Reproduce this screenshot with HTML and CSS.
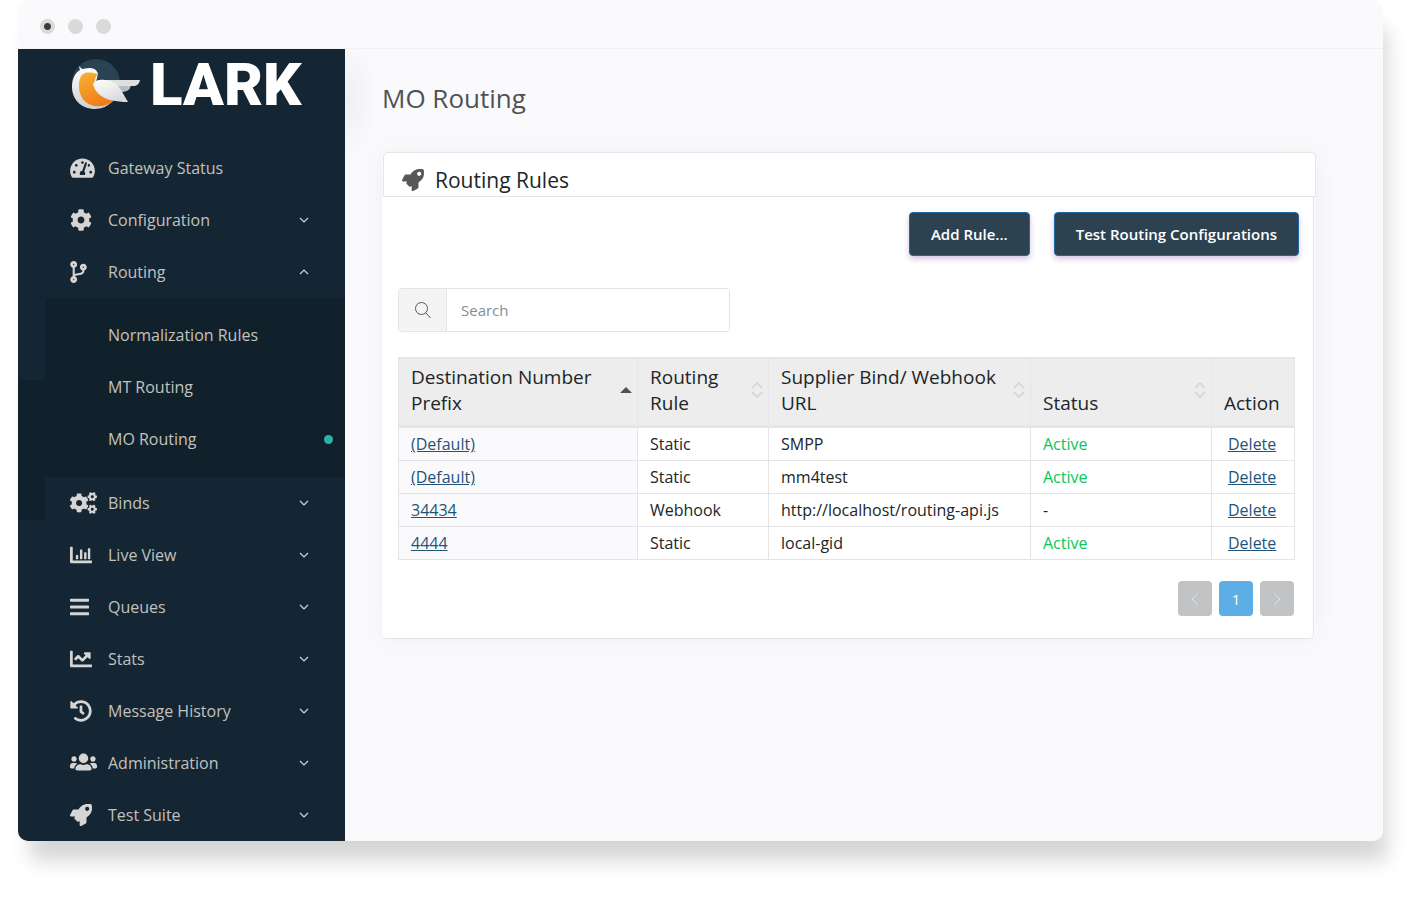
FILE: index.html
```html
<!DOCTYPE html>
<html lang="en">
<head>
<meta charset="utf-8">
<title>MO Routing</title>
<meta name="viewport" content="width=device-width, initial-scale=1">
<link rel="stylesheet" href="styles.css">
</head>
<body>
<div class="window">
  <div class="titlebar"><span class="dot dot-active"></span><span class="dot"></span><span class="dot"></span></div>
  <div class="app">
    <aside class="sidebar">
      <a class="logo" href="#">
        <svg class="logo-bird" width="70" height="50" viewBox="0 0 70 50" aria-hidden="true">
          <defs>
            <linearGradient id="body" x1="0" y1="0" x2="0" y2="1"><stop offset="0" stop-color="#fff"/><stop offset="1" stop-color="#cfd0d2"/></linearGradient>
            <linearGradient id="belly" x1="0" y1="0" x2="0.4" y2="1"><stop offset="0" stop-color="#f9b233"/><stop offset="1" stop-color="#ef7f1a"/></linearGradient>
            <linearGradient id="wing" x1="0" y1="0" x2="0.6" y2="1"><stop offset="0" stop-color="#fff"/><stop offset="1" stop-color="#d9dadc"/></linearGradient>
          </defs>
          <circle cx="25" cy="24" r="24" fill="#2a4352"/>
          <path d="M8 7l3 3 7-1c5 0 8 2 9 6l-2 8 17 19c-5 5-11 8-18 8C10 50 1 40 1 28 1 20 4 14 9 11z" fill="url(#body)"/>
          <path d="M27 15c-5-1-9-2-13-1-5 2-6 7-6 14 0 10 7 18 16 19 8 1 14-1 18-5L24 26c-1-4 0-8 3-11z" fill="url(#belly)"/>
          <path d="M44 26h16c-1 5-4 7-10 7z" fill="#b9bcbf"/>
          <path d="M28 21h41c-1 4-3 6-7 6H40z" fill="#dfe0e1"/>
          <path d="M22 25c2-4 7-5 12-4 9 1 13 5 16 10l7 12c-12 0-22-2-28-7-4-3-6-7-7-11z" fill="url(#wing)"/>
        </svg>
        <span class="logo-text">LARK</span>
      </a>
      <nav class="nav">
        <a class="nav-item" href="#"><svg class="nav-icon" width="25" height="22" viewBox="0 0 576 512"><path d="M288 32C128.900 32 0 160.900 0 320c0 52.800 14.200 102.300 39 144.800 5.600 9.600 16.300 15.200 27.400 15.200h443.200c11.100 0 21.800-5.600 27.400-15.200C561.800 422.300 576 372.800 576 320c0-159.100-128.900-288-288-288zm0 64c14.700 0 26.600 10.100 30.300 23.700-1.100 2.300-2.600 4.200-3.500 6.700l-9.200 27.700c-5.100 3.500-11 6-17.600 6-17.700 0-32-14.300-32-32S270.300 96 288 96zM96 384c-17.700 0-32-14.300-32-32s14.300-32 32-32 32 14.300 32 32-14.300 32-32 32zm48-160c-17.700 0-32-14.300-32-32s14.300-32 32-32 32 14.300 32 32-14.300 32-32 32zm246.800-72.400l-61.300 184C343.100 347.300 352 364.500 352 384c0 11.700-3.400 22.600-8.900 32H232.900c-5.500-9.500-8.900-20.300-8.900-32 0-33.900 26.500-61.400 59.900-63.600l61.300-184c4.200-12.600 17.700-19.500 30.400-15.200 12.600 4.200 19.400 17.800 15.200 30.400zm14.700 57.200l15.500-46.600c3.500-1.300 7.100-2.200 11.100-2.200 17.700 0 32 14.300 32 32s-14.300 32-32 32c-11.400 0-20.900-6.300-26.600-15.200zM480 384c-17.700 0-32-14.300-32-32s14.300-32 32-32 32 14.300 32 32-14.300 32-32 32z"/></svg><span class="nav-label">Gateway Status</span></a>
        <a class="nav-item" href="#"><svg class="nav-icon" width="22" height="22" viewBox="0 0 512 512"><path d="M487.400 315.700l-42.600-24.600c4.300-23.200 4.300-47 0-70.200l42.600-24.600c4.900-2.800 7.100-8.600 5.500-14-11.100-35.600-30-67.800-54.700-94.600-3.800-4.100-10-5.100-14.800-2.300L380.800 110c-17.900-15.400-38.500-27.300-60.800-35.100V25.800c0-5.600-3.900-10.500-9.400-11.700-36.700-8.200-74.300-7.800-109.200 0-5.500 1.200-9.400 6.100-9.400 11.700V75c-22.200 7.900-42.800 19.800-60.800 35.100L88.700 85.500c-4.900-2.800-11-1.900-14.800 2.300-24.700 26.700-43.600 58.900-54.700 94.600-1.700 5.400.6 11.200 5.500 14L67.300 221c-4.300 23.200-4.300 47 0 70.200l-42.600 24.600c-4.900 2.800-7.100 8.600-5.500 14 11.100 35.600 30 67.800 54.700 94.600 3.800 4.100 10 5.100 14.800 2.300l42.600-24.600c17.900 15.400 38.500 27.300 60.800 35.100v49.200c0 5.600 3.900 10.500 9.400 11.700 36.700 8.200 74.300 7.800 109.200 0 5.500-1.200 9.400-6.100 9.400-11.700v-49.200c22.200-7.900 42.800-19.800 60.800-35.100l42.600 24.600c4.900 2.800 11 1.900 14.800-2.300 24.700-26.700 43.600-58.900 54.700-94.600 1.500-5.500-.7-11.300-5.600-14.100zM256 336c-44.100 0-80-35.900-80-80s35.900-80 80-80 80 35.900 80 80-35.900 80-80 80z"/></svg><span class="nav-label">Configuration</span><svg class="chevron" width="10" height="6" viewBox="0 0 10 6"><path d="M1 1l4 4 4-4"/></svg></a>
        <a class="nav-item" href="#" aria-expanded="true"><svg class="nav-icon" width="17" height="22" viewBox="0 0 384 512"><path d="M384 144c0-44.200-35.800-80-80-80s-80 35.800-80 80c0 36.400 24.300 67.100 57.500 76.800-.6 16.100-4.200 28.500-11 36.900-15.400 19.200-49.300 22.400-85.200 25.700-28.200 2.600-57.400 5.400-81.300 16.900v-144c32.500-10.200 56-40.500 56-76.300 0-44.200-35.800-80-80-80S0 35.800 0 80c0 35.800 23.500 66.100 56 76.300v199.300C23.500 365.900 0 396.200 0 432c0 44.200 35.800 80 80 80s80-35.800 80-80c0-34-21.200-63.100-51.200-74.600 3.100-5.200 7.800-9.800 14.900-13.400 16.200-8.200 40.400-10.400 66.100-12.800 42.200-3.900 90-8.400 118.200-43.400 14-17.400 21.100-39.800 21.600-67.900 31.600-10.800 54.400-40.700 54.400-75.900zM80 64c8.800 0 16 7.200 16 16s-7.200 16-16 16-16-7.200-16-16 7.200-16 16-16zm0 384c-8.800 0-16-7.200-16-16s7.200-16 16-16 16 7.200 16 16-7.200 16-16 16zm224-320c8.800 0 16 7.200 16 16s-7.200 16-16 16-16-7.200-16-16 7.200-16 16-16z"/></svg><span class="nav-label">Routing</span><svg class="chevron" width="10" height="6" viewBox="0 0 10 6"><path d="M1 5l4-4 4 4"/></svg></a>
        <div class="submenu">
          <a class="nav-item" href="#"><span class="nav-label">Normalization Rules</span></a>
          <a class="nav-item" href="#"><span class="nav-label">MT Routing</span></a>
          <a class="nav-item current" href="#" aria-current="page"><span class="nav-label">MO Routing</span><span class="marker"></span></a>
        </div>
        <a class="nav-item" href="#"><svg class="nav-icon" width="27" height="22" viewBox="0 0 640 512"><path d="M512.100 191l-8.200 14.300c-3 5.300-9.400 7.500-15.100 5.400-11.800-4.400-22.600-10.700-32.100-18.600-4.600-3.800-5.800-10.500-2.800-15.700l8.200-14.300c-6.900-8-12.300-17.300-15.900-27.400h-16.500c-6 0-11.200-4.300-12.200-10.300-2-12-2.100-24.600 0-37.100 1-6 6.200-10.400 12.200-10.400h16.500c3.600-10.100 9-19.400 15.900-27.400l-8.200-14.300c-3-5.200-1.900-11.900 2.800-15.700 9.500-7.900 20.400-14.200 32.100-18.600 5.700-2.100 12.100.1 15.100 5.400l8.200 14.300c10.500-1.900 21.200-1.900 31.700 0L552 6.300c3-5.300 9.400-7.500 15.100-5.400 11.800 4.400 22.600 10.700 32.100 18.600 4.600 3.800 5.800 10.500 2.800 15.700l-8.200 14.300c6.900 8 12.300 17.300 15.900 27.400h16.500c6 0 11.200 4.300 12.200 10.300 2 12 2.100 24.600 0 37.100-1 6-6.200 10.400-12.200 10.400h-16.500c-3.600 10.100-9 19.400-15.900 27.400l8.200 14.300c3 5.200 1.900 11.900-2.800 15.700-9.500 7.900-20.400 14.200-32.100 18.600-5.700 2.100-12.100-.1-15.100-5.400l-8.200-14.300c-10.400 1.900-21.200 1.900-31.700 0zm-10.500-58.800c38.500 29.600 82.400-14.300 52.800-52.800-38.500-29.700-82.400 14.300-52.800 52.800zM386.300 286.100l33.700 16.800c10.100 5.800 14.500 18.100 10.500 29.100-8.900 24.200-26.400 46.400-42.600 65.800-7.400 8.900-20.200 11.100-30.300 5.300l-29.100-16.800c-16 13.700-34.600 24.600-54.900 31.700v33.600c0 11.600-8.300 21.600-19.700 23.600-24.600 4.200-50.400 4.400-75.900 0-11.500-2-20-11.900-20-23.600V418c-20.300-7.200-38.900-18-54.900-31.700L74 403c-10 5.800-22.900 3.600-30.300-5.300-16.200-19.400-33.300-41.600-42.200-65.700-4-10.900.4-23.200 10.500-29.100l33.300-16.800c-3.900-20.900-3.900-42.400 0-63.400L12 205.800c-10.100-5.800-14.600-18.100-10.500-29 8.900-24.200 26-46.400 42.200-65.800 7.400-8.900 20.200-11.100 30.300-5.300l29.100 16.800c16-13.700 34.600-24.600 54.900-31.700V57.100c0-11.500 8.200-21.500 19.600-23.500 24.600-4.200 50.500-4.400 76-.1 11.500 2 20 11.900 20 23.600v33.600c20.300 7.200 38.900 18 54.900 31.700l29.100-16.800c10-5.800 22.900-3.600 30.300 5.300 16.200 19.400 33.200 41.600 42.100 65.800 4 10.900.1 23.200-10 29.100l-33.700 16.800c3.900 21 3.900 42.500 0 63.500zm-117.600 21.100c59.200-77-28.700-164.900-105.700-105.700-59.200 77 28.700 164.900 105.700 105.700zm243.400 182.700l-8.200 14.300c-3 5.300-9.400 7.500-15.100 5.400-11.800-4.400-22.600-10.700-32.100-18.600-4.600-3.800-5.800-10.500-2.800-15.700l8.200-14.300c-6.900-8-12.300-17.300-15.900-27.400h-16.500c-6 0-11.200-4.300-12.200-10.300-2-12-2.100-24.600 0-37.100 1-6 6.200-10.400 12.200-10.400h16.500c3.600-10.100 9-19.400 15.900-27.400l-8.200-14.300c-3-5.200-1.900-11.900 2.800-15.700 9.500-7.900 20.400-14.200 32.100-18.600 5.700-2.100 12.100.1 15.100 5.400l8.200 14.300c10.500-1.900 21.200-1.900 31.700 0l8.200-14.300c3-5.300 9.400-7.500 15.100-5.400 11.800 4.400 22.600 10.700 32.100 18.600 4.600 3.800 5.800 10.500 2.800 15.700l-8.200 14.300c6.900 8 12.300 17.300 15.900 27.400h16.500c6 0 11.200 4.300 12.200 10.300 2 12 2.100 24.600 0 37.100-1 6-6.200 10.400-12.200 10.400h-16.500c-3.600 10.100-9 19.400-15.900 27.400l8.200 14.300c3 5.200 1.900 11.900-2.800 15.700-9.500 7.900-20.400 14.200-32.100 18.600-5.700 2.100-12.100-.1-15.100-5.400l-8.200-14.300c-10.400 1.900-21.200 1.900-31.700 0zM501.600 431c38.500 29.600 82.400-14.300 52.800-52.800-38.500-29.600-82.400 14.300-52.800 52.800z"/></svg><span class="nav-label">Binds</span><svg class="chevron" width="10" height="6" viewBox="0 0 10 6"><path d="M1 1l4 4 4-4"/></svg></a>
        <a class="nav-item" href="#"><svg class="nav-icon" width="22" height="22" viewBox="0 0 512 512"><path d="M0 80q0-16 16-16h32q16 0 16 16v304h432q16 0 16 16v32q0 16-16 16H32q-32 0-32-32zM136 268q0-12 12-12h32q12 0 12 12v72q0 12-12 12h-32q-12 0-12-12zM232 140q0-12 12-12h32q12 0 12 12v200q0 12-12 12h-32q-12 0-12-12zM328 204q0-12 12-12h32q12 0 12 12v136q0 12-12 12h-32q-12 0-12-12zM416 108q0-12 12-12h32q12 0 12 12v232q0 12-12 12h-32q-12 0-12-12z"/></svg><span class="nav-label">Live View</span><svg class="chevron" width="10" height="6" viewBox="0 0 10 6"><path d="M1 1l4 4 4-4"/></svg></a>
        <a class="nav-item" href="#"><svg class="nav-icon" width="19" height="22" viewBox="0 0 448 512"><path d="M16 132h416c8.800 0 16-7.200 16-16V76c0-8.800-7.200-16-16-16H16C7.200 60 0 67.200 0 76v40c0 8.800 7.200 16 16 16zm0 160h416c8.800 0 16-7.200 16-16v-40c0-8.800-7.200-16-16-16H16c-8.800 0-16 7.200-16 16v40c0 8.800 7.200 16 16 16zm0 160h416c8.800 0 16-7.200 16-16v-40c0-8.800-7.200-16-16-16H16c-8.800 0-16 7.200-16 16v40c0 8.800 7.200 16 16 16z"/></svg><span class="nav-label">Queues</span><svg class="chevron" width="10" height="6" viewBox="0 0 10 6"><path d="M1 1l4 4 4-4"/></svg></a>
        <a class="nav-item" href="#"><svg class="nav-icon" width="22" height="22" viewBox="0 0 512 512"><path d="M496 384H64V80c0-8.800-7.200-16-16-16H16C7.200 64 0 71.200 0 80v336c0 17.700 14.300 32 32 32h464c8.800 0 16-7.200 16-16v-32c0-8.800-7.200-16-16-16zM464 96H345.900c-21.400 0-32.100 25.900-17 41l32.400 32.400L288 242.800l-73.400-73.400c-12.500-12.500-32.800-12.500-45.300 0l-68.700 68.700c-6.200 6.200-6.200 16.400 0 22.600l22.600 22.600c6.200 6.200 16.400 6.200 22.600 0L192 237.300l73.400 73.400c12.500 12.500 32.800 12.500 45.300 0l96-96 32.400 32.400c15.100 15.100 41 4.400 41-17V112c-.1-8.800-7.300-16-16.100-16z"/></svg><span class="nav-label">Stats</span><svg class="chevron" width="10" height="6" viewBox="0 0 10 6"><path d="M1 1l4 4 4-4"/></svg></a>
        <a class="nav-item" href="#"><svg class="nav-icon" width="22" height="22" viewBox="0 0 512 512"><path d="M504 255.500c.3 136.600-111.200 248.400-247.800 248.500-59 0-113.200-20.500-155.800-54.900-11.100-8.900-11.900-25.500-1.800-35.600l11.300-11.300c8.600-8.600 22.400-9.600 31.900-2C173.100 425.100 212.800 440 256 440c101.700 0 184-82.300 184-184 0-101.700-82.300-184-184-184-48.800 0-93.100 19-126.100 49.900l50.800 50.800c10.100 10.100 2.900 27.300-11.300 27.300H24c-8.800 0-16-7.200-16-16V38.600c0-14.300 17.200-21.400 27.300-11.300l49.400 49.400C129.200 34.100 189.600 8 256 8c136.800 0 247.700 110.800 248 247.500zM323.100 334.500l9.800-12.600c8.100-10.500 6.300-25.500-4.200-33.700L288 256.300V152c0-13.300-10.700-24-24-24h-16c-13.300 0-24 10.700-24 24v135.700l65.400 50.900c10.500 8.100 25.500 6.300 33.700-4.100z"/></svg><span class="nav-label">Message History</span><svg class="chevron" width="10" height="6" viewBox="0 0 10 6"><path d="M1 1l4 4 4-4"/></svg></a>
        <a class="nav-item" href="#"><svg class="nav-icon" width="27" height="22" viewBox="0 0 640 512"><path d="M96 224c35.300 0 64-28.700 64-64s-28.700-64-64-64-64 28.700-64 64 28.700 64 64 64zm448 0c35.300 0 64-28.700 64-64s-28.700-64-64-64-64 28.700-64 64 28.700 64 64 64zm32 32h-64c-17.600 0-33.500 7.100-45.100 18.600 40.300 22.100 68.900 62 75.100 109.400h66c17.700 0 32-14.300 32-32v-32c0-35.300-28.700-64-64-64zm-256 0c61.900 0 112-50.100 112-112S381.900 32 320 32 208 82.100 208 144s50.100 112 112 112zm76.800 32h-8.300c-20.800 10-43.900 16-68.500 16s-47.600-6-68.500-16h-8.300C179.600 288 128 339.600 128 403.200V400c0 26.500 21.500 32 48 32h288c26.500 0 48-5.500 48-32v3.200c0-63.600-51.600-115.200-115.200-115.200zm-223.700-13.400C161.500 263.100 145.600 256 128 256H64c-35.300 0-64 28.700-64 64v32c0 17.700 14.300 32 32 32h65.900c6.300-47.400 34.900-87.300 75.200-109.400z"/></svg><span class="nav-label">Administration</span><svg class="chevron" width="10" height="6" viewBox="0 0 10 6"><path d="M1 1l4 4 4-4"/></svg></a>
        <a class="nav-item" href="#"><svg class="nav-icon" width="22" height="22" viewBox="0 0 512 512"><path d="M505.100 19.100C503.800 13 499 8.200 492.900 6.900 460.700 0 435.500 0 410.400 0 307.200 0 245.300 55.200 199.100 128H94.900c-18.200 0-34.800 10.300-42.900 26.500L2.600 253.300c-8 16 3.600 34.700 21.500 34.700h95.100c-5.900 12.800-11.900 25.500-18 37.700-3.100 6.200-1.900 13.600 3 18.500l63.600 63.600c4.900 4.900 12.300 6.100 18.500 3 12.200-6.100 24.900-12 37.700-17.900V488c0 17.800 18.800 29.400 34.700 21.500l98.700-49.400c16.300-8.100 26.500-24.800 26.500-42.900V312.800c72.600-46.300 128-108.400 128-211.100.1-25.200.1-50.400-6.800-82.600zM400 160c-26.500 0-48-21.500-48-48s21.500-48 48-48 48 21.500 48 48-21.500 48-48 48z"/></svg><span class="nav-label">Test Suite</span><svg class="chevron" width="10" height="6" viewBox="0 0 10 6"><path d="M1 1l4 4 4-4"/></svg></a>
      </nav>
    </aside>
    <main class="main">
      <h1 class="page-title">MO Routing</h1>
      <section class="card">
        <header class="card-header">
          <svg class="card-icon" width="22" height="22" viewBox="0 0 512 512" aria-hidden="true"><path d="M505.100 19.100C503.800 13 499 8.200 492.900 6.900 460.700 0 435.500 0 410.400 0 307.200 0 245.300 55.200 199.100 128H94.900c-18.200 0-34.800 10.300-42.900 26.500L2.600 253.300c-8 16 3.600 34.700 21.500 34.700h95.100c-5.900 12.800-11.900 25.500-18 37.700-3.100 6.200-1.900 13.600 3 18.500l63.600 63.600c4.900 4.900 12.300 6.100 18.500 3 12.200-6.100 24.900-12 37.700-17.900V488c0 17.800 18.800 29.400 34.700 21.500l98.700-49.400c16.300-8.100 26.500-24.800 26.500-42.900V312.800c72.600-46.300 128-108.400 128-211.100.1-25.200.1-50.400-6.800-82.600zM400 160c-26.500 0-48-21.500-48-48s21.500-48 48-48 48 21.500 48 48-21.500 48-48 48z"/></svg>
          <h2 class="card-title">Routing Rules</h2>
        </header>
        <div class="card-body">
          <div class="actions">
            <button class="btn" type="button">Add Rule...</button>
            <button class="btn" type="button">Test Routing Configurations</button>
          </div>
          <div class="search">
            <label class="search-icon" for="search" aria-label="Search"><svg width="16" height="17" viewBox="0 0 16 17"><circle cx="6.500" cy="6.500" r="6"/><path d="M11 11l4.500 5"/></svg></label>
            <input class="search-input" id="search" type="text" placeholder="Search">
          </div>
          <div class="table-area">
            <table class="rules">
              <colgroup><col class="col-prefix"><col class="col-rule"><col class="col-url"><col class="col-status"><col class="col-action"></colgroup>
              <thead>
                <tr>
                  <th scope="col" aria-sort="ascending"><div class="head"><span class="head-text">Destination Number Prefix</span><svg class="sort" width="12" height="6" viewBox="0 0 12 6"><path d="M0 6l6-6 6 6z" fill="#4f5355"/></svg></div></th>
                  <th scope="col"><div class="head"><span class="head-text">Routing Rule</span><svg class="sort" width="12" height="16" viewBox="0 0 12 16"><path class="sort-line" d="M1 6l5-5 5 5M1 10l5 5 5-5"/></svg></div></th>
                  <th scope="col"><div class="head"><span class="head-text">Supplier Bind/ Webhook URL</span><svg class="sort" width="12" height="16" viewBox="0 0 12 16"><path class="sort-line" d="M1 6l5-5 5 5M1 10l5 5 5-5"/></svg></div></th>
                  <th scope="col"><div class="head"><span class="head-text">Status</span><svg class="sort" width="12" height="16" viewBox="0 0 12 16"><path class="sort-line" d="M1 6l5-5 5 5M1 10l5 5 5-5"/></svg></div></th>
                  <th scope="col"><div class="head"><span class="head-text">Action</span></div></th>
                </tr>
              </thead>
              <tbody>
                <tr><td><a href="#">(Default)</a></td><td>Static</td><td>SMPP</td><td class="active">Active</td><td><a href="#">Delete</a></td></tr>
                <tr><td><a href="#">(Default)</a></td><td>Static</td><td>mm4test</td><td class="active">Active</td><td><a href="#">Delete</a></td></tr>
                <tr><td><a href="#">34434</a></td><td>Webhook</td><td>http://localhost/routing-api.js</td><td>-</td><td><a href="#">Delete</a></td></tr>
                <tr><td><a href="#">4444</a></td><td>Static</td><td>local-gid</td><td class="active">Active</td><td><a href="#">Delete</a></td></tr>
              </tbody>
            </table>
            <div class="pager">
              <button class="page-btn" type="button" aria-label="Previous page"><svg width="8" height="14" viewBox="0 0 8 14"><path d="M7 1L1 7l6 6"/></svg></button>
              <button class="page-btn page-current" type="button">1</button>
              <button class="page-btn" type="button" aria-label="Next page"><svg width="8" height="14" viewBox="0 0 8 14"><path d="M1 1l6 6-6 6"/></svg></button>
            </div>
          </div>
        </div>
      </section>
    </main>
  </div>
</div>
</body>
</html>
```
FILE: styles.css
```css
* { box-sizing: border-box; }

body {
  margin: 0;
  background: #fff;
  color: #212529;
  font-family: "Open Sans", "Noto Sans", sans-serif;
  font-size: 16px;
  line-height: 24px;
}

.window {
  margin: 0 37px 56px 18px;
  border-radius: 10px;
  background: #fafafc;
  box-shadow: 8px 24px 20px -4px #d6d6d6;
  overflow: hidden;
}

.titlebar {
  display: flex;
  align-items: center;
  gap: 13px;
  height: 49px;
  padding: 4px 22px 0;
  border-bottom: 1px solid #f2f2f5;
}

.dot {
  width: 15px;
  height: 15px;
  border-radius: 50%;
  background: #dadadb;
}

.dot-active { background: radial-gradient(circle, #3c3c3c 3px, #dadadb 4px); }

.app { display: flex; }

.sidebar {
  flex: 0 0 327px;
  padding-left: 27px;
  background: linear-gradient(#11212c, #11212c) no-repeat 0 331px / 27px 140px #142633;
}

.logo {
  display: flex;
  align-items: flex-start;
  gap: 9px;
  height: 93px;
  padding: 10px 0 0 26px;
  color: #fff;
  text-decoration: none;
}

.logo-text {
  font-family: Roboto, sans-serif;
  font-size: 60px;
  font-weight: 900;
  line-height: 52px;
}

.nav-item {
  display: grid;
  grid-template-columns: 38px 1fr auto;
  align-items: center;
  height: 52px;
  padding: 0 36px 0 25px;
  color: #c3c1be;
  text-decoration: none;
}

.nav-icon { fill: #d6d5d4; }
.nav-label { grid-column: 2; }

.chevron {
  fill: none;
  stroke: #d6d5d4;
  stroke-width: 1.2;
}

.submenu {
  padding: 11px 0 12px;
  background: #11212c;
}

.submenu .nav-item { padding-right: 12px; }

.marker {
  width: 9px;
  height: 9px;
  border-radius: 50%;
  background: #2bb3a3;
}

.main {
  flex: 1;
  min-width: 0;
  padding: 31px 67px 40px 37px;
  background: radial-gradient(ellipse 34px 60px at 0 50px, #efeef1, #fafafc) no-repeat;
}

.page-title {
  margin: 0 0 36px;
  color: #4f5254;
  font-size: 26px;
  font-weight: 400;
  line-height: 36px;
}

.card {
  border-radius: 5px;
  box-shadow: 0 0 24px #f0edf2;
}

.card-header {
  display: flex;
  align-items: center;
  gap: 11px;
  height: 45px;
  margin: 0 0 0 1px;
  padding: 11px 18px 0;
  border: 1px solid #e6e6e8;
  border-radius: 5px 5px 0 0;
  background: #fff;
}

.card-icon { fill: #56585a; }

.card-title {
  margin: 0;
  font-size: 21px;
  font-weight: 400;
  line-height: 30px;
}

.card-body {
  margin-right: 2px;
  padding: 15px 14px 22px 16px;
  border: 1px solid #e3e3e7;
  border-width: 0 1px 1px 0;
  border-radius: 0 0 5px 5px;
  background: #fff;
}

.actions {
  display: flex;
  justify-content: flex-end;
  gap: 24px;
}

.btn {
  height: 44px;
  padding: 0 21px;
  border: 1px solid #1e6aa5;
  border-radius: 4px;
  background: #2c4251;
  box-shadow: 0 3px 6px #d3c4e0;
  color: #fff;
  font: 600 15px/24px "Open Sans", "Noto Sans", sans-serif;
}

.search {
  display: flex;
  width: 332px;
  max-width: 100%;
  height: 44px;
  margin: 32px 0 25px;
  border: 1px solid #e4e4e6;
  border-radius: 4px;
  overflow: hidden;
}

.search-icon {
  display: grid;
  place-items: center;
  flex: 0 0 48px;
  border-right: 1px solid #e4e4e6;
  background: #f4f4f4;
}

.search-icon svg {
  fill: none;
  stroke: #55585a;
  stroke-width: 1;
}

.search-input {
  flex: 1;
  min-width: 0;
  padding: 0 14px;
  border: 0;
  background: #fff;
  color: #212529;
  font: 15px/24px "Open Sans", "Noto Sans", sans-serif;
}

.search-input::placeholder { color: #868e96; opacity: 1; }

.table-area { margin-right: 5px; }

.rules {
  width: 100%;
  border-collapse: collapse;
  table-layout: fixed;
}

.col-prefix { width: 239px; }
.col-rule { width: 131px; }
.col-url { width: 262px; }
.col-status { width: 181px; }
.col-action { width: 83px; }

.rules th {
  padding: 6px 5px 9px 12px;
  border: 1px solid #e6e6e6;
  border-top-width: 2px;
  border-bottom-width: 3px;
  background: #ededed;
  font-size: 19px;
  font-weight: 400;
  line-height: 26px;
  text-align: left;
  vertical-align: bottom;
}

.rules th { padding-top: 5px; }

.head {
  display: flex;
  align-items: flex-end;
  justify-content: space-between;
  min-height: 52px;
}

.sort {
  flex: none;
  align-self: center;
}

.sort-line {
  fill: none;
  stroke: #d2d2d2;
  stroke-width: 1.5;
}

.rules td {
  padding: 4px 12px;
  border: 1px solid #e4e4e6;
}

.rules td:first-child { background: #fafafc; }
.rules td:last-child { padding-left: 16px; }
.rules td a { color: #1f5479; }
.rules .active { color: #07c65a; }

.pager {
  display: flex;
  justify-content: flex-end;
  gap: 7px;
  margin-top: 21px;
}

.page-btn {
  display: grid;
  place-items: center;
  width: 34px;
  height: 35px;
  padding: 0;
  border: 0;
  border-radius: 4px;
  background: #c2c3c5;
  color: #fff;
  font: 15px/24px "Open Sans", "Noto Sans", sans-serif;
}

.page-btn svg {
  fill: none;
  stroke: #e2e3e5;
  stroke-width: 1;
}

.page-current { background: #5eaee6; }
```
